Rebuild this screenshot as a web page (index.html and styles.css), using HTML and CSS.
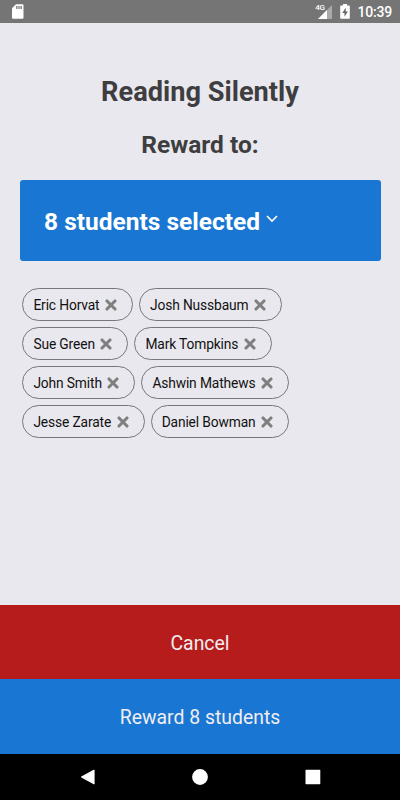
FILE: index.html
```html
<!DOCTYPE html>
<html lang="en">
<head>
<meta charset="utf-8">
<title>Reading Silently</title>
<link rel="stylesheet" href="styles.css">
</head>
<body>
<div class="screen">
  <header class="status">
    <svg class="sd" width="12" height="15" viewBox="0 0 12 15"><path fill="#fff" d="M4 .3h6.300q1.200 0 1.200 1.200v12q0 1.200-1.200 1.200h-9Q0 14.700 0 13.500V4.300z"/><path stroke="#777" stroke-width="1.300" d="M4.800 2v3M7 2v3M9.200 2v3"/></svg>
    <div class="indicators">
      <span class="network">4G</span>
      <svg class="signal" width="14" height="14" viewBox="0 0 14 14"><path fill="#a9a9a9" d="M14 0v14H0z"/><path fill="#fff" d="M9 5v9H0z"/></svg>
      <svg class="battery" width="10" height="15" viewBox="0 0 10 15"><path fill="#fff" d="M3 0h4v1.500h2q.8 0 .8.8v11.700q0 .8-.8.8H1q-.8 0-.8-.8V2.300q0-.8.8-.8h2z"/><path fill="#666" d="M5.700 3.700 2.300 9h2.200v3.700L7.900 7.500H5.700z"/></svg>
      <span class="clock">10:39</span>
    </div>
  </header>
  <main class="content">
    <h1>Reading Silently</h1>
    <h2>Reward to:</h2>
    <div class="select"><span>8 students selected</span><svg width="12" height="8" viewBox="0 0 12 8"><path d="m1 1 5 5 5-5" fill="none" stroke="#fff" stroke-width="1.700"/></svg></div>
    <div class="chips">
      <div class="chip"><span>Eric Horvat</span><svg class="x" viewBox="0 0 12 12"><path d="m2 2 8 8m0-8-8 8"/></svg></div>
      <div class="chip"><span>Josh Nussbaum</span><svg class="x" viewBox="0 0 12 12"><path d="m2 2 8 8m0-8-8 8"/></svg></div>
      <div class="chip"><span>Sue Green</span><svg class="x" viewBox="0 0 12 12"><path d="m2 2 8 8m0-8-8 8"/></svg></div>
      <div class="chip"><span>Mark Tompkins</span><svg class="x" viewBox="0 0 12 12"><path d="m2 2 8 8m0-8-8 8"/></svg></div>
      <div class="chip"><span>John Smith</span><svg class="x" viewBox="0 0 12 12"><path d="m2 2 8 8m0-8-8 8"/></svg></div>
      <div class="chip"><span>Ashwin Mathews</span><svg class="x" viewBox="0 0 12 12"><path d="m2 2 8 8m0-8-8 8"/></svg></div>
      <div class="chip"><span>Jesse Zarate</span><svg class="x" viewBox="0 0 12 12"><path d="m2 2 8 8m0-8-8 8"/></svg></div>
      <div class="chip"><span>Daniel Bowman</span><svg class="x" viewBox="0 0 12 12"><path d="m2 2 8 8m0-8-8 8"/></svg></div>
    </div>
  </main>
  <div class="action cancel">Cancel</div>
  <div class="action reward">Reward 8 students</div>
  <nav class="nav">
    <svg width="16" height="16" viewBox="0 0 16 16"><path d="M14 1.300v13.400L1.600 8z" fill="#fff" stroke="#fff" stroke-width="1.200" stroke-linejoin="round"/></svg>
    <svg width="16" height="16" viewBox="0 0 16 16"><circle cx="8" cy="8" r="7.900" fill="#fff"/></svg>
    <svg width="16" height="16" viewBox="0 0 16 16"><rect x=".5" y=".7" width="14.800" height="14.600" rx=".8" fill="#fff"/></svg>
  </nav>
</div>
</body>
</html>
```
FILE: styles.css
```css
* { box-sizing: border-box; }
body { margin: 0; font-family: Roboto, "Liberation Sans", sans-serif; }
svg { display: block; flex: none; }
.screen { width: 400px; height: 800px; display: flex; flex-direction: column; background: #e9e8ee; overflow: hidden; }
.status { height: 23px; flex: none; background: #757575; display: flex; justify-content: space-between; padding: 4px 8px 0 12px; color: #fff; }
.indicators { display: flex; }
.network { font-size: 8px; line-height: 8px; font-weight: 500; letter-spacing: -.4px; margin-right: -6px; }
.signal { margin-top: 1px; }
.battery { margin: 0 0 0 8px; }
.clock { font-size: 14px; line-height: 16px; font-weight: 500; margin-left: 7px; letter-spacing: -.2px; }
.content { flex: 1; padding: 0 20px; color: #3e3e40; }
h1 { margin: 52px 0 0; font-size: 27.200px; line-height: 34px; font-weight: 700; text-align: center; }
h2 { margin: 20px 0 0; font-size: 24.500px; line-height: 32px; font-weight: 700; text-align: center; }
.select { margin: 19px -.5px 0; height: 81px; background: #1976d3; border-radius: 3px; color: #fff; font-size: 24.500px; font-weight: 700; display: flex; align-items: center; gap: 6px; padding: 2px 24.500px 0; }
.select svg { margin-top: -5px; }
.chips { display: flex; flex-wrap: wrap; gap: 5.900px 6px; margin: 27.400px 70px 0 2.400px; }
.chip { height: 33px; border: 1px solid #77777b; border-radius: 17px; display: flex; align-items: center; gap: 5.500px; padding: 0 15px 0 10px; color: #111; font-size: 13.800px; letter-spacing: -.14px; white-space: nowrap; }
.x { width: 12px; height: 12px; }
.x path { stroke: #7d807f; stroke-width: 3.100; stroke-linecap: round; fill: none; }
.action { flex: none; height: 74.500px; display: flex; align-items: center; justify-content: center; padding-top: 2px; font-size: 19.400px; color: #f1edf0; }
.cancel { background: #b51c1b; padding-top: 3px; }
.reward { background: #1976d3; }
.nav { height: 46.500px; flex: none; background: #000; display: flex; align-items: center; justify-content: space-between; padding: 0 79.500px; }
```
